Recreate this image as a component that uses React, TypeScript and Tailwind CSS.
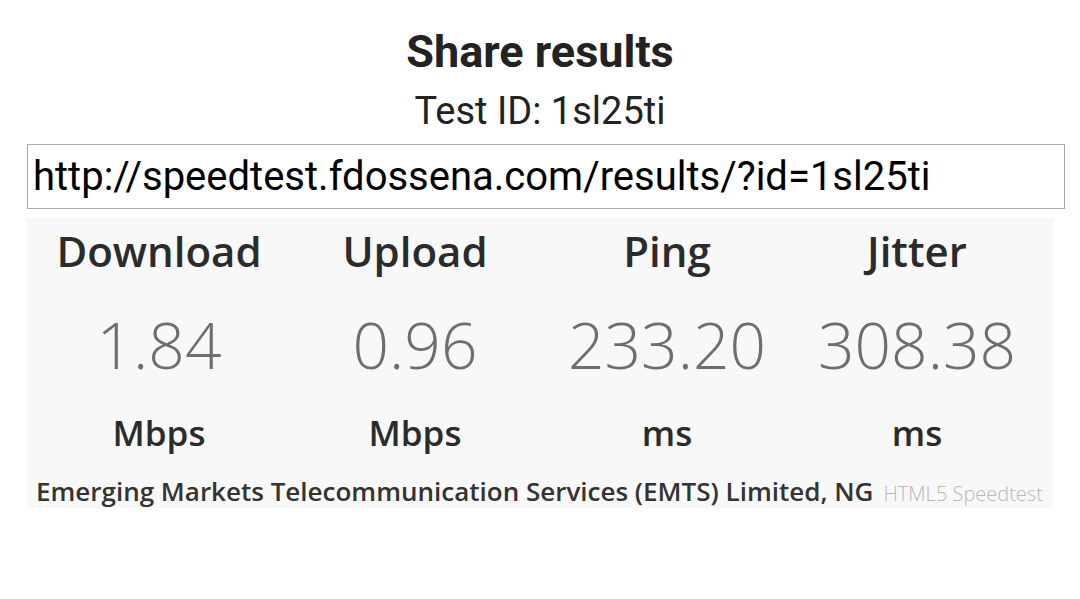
import React from "react";

const cols = [
  { label: "Download", value: "1.84", unit: "Mbps" },
  { label: "Upload", value: "0.96", unit: "Mbps" },
  { label: "Ping", value: "233.20", unit: "ms" },
  { label: "Jitter", value: "308.38", unit: "ms" },
];

export default function App() {
  return (
    <div className="w-[1080px] h-[599px] bg-white flex flex-col" style={{ fontFamily: "Roboto, sans-serif" }}>
      <h1 className="mt-[26px] text-center text-[45px] leading-[52px] font-bold text-[#222]">Share results</h1>
      <div className="text-center text-[38px] leading-[44px] text-[#222] mt-[11px]">Test ID: 1sl25ti</div>
      <div className="ml-[27px] mt-[11px] w-[1038px] h-[65px] border border-[#a9a9a9] flex items-start pt-[9px] px-[5px] text-[40px] leading-[46px] text-black">
        http://speedtest.fdossena.com/results/?id=1sl25ti
      </div>
      <div
        className="ml-[27px] mt-[9px] w-[1026px] h-[290px] bg-[#f8f8f8] flex flex-col"
        style={{ fontFamily: "'Open Sans', sans-serif" }}
      >
        <div className="grid grid-cols-[264px_248px_256px_244px] pr-[14px]">
          {cols.map((c) => (
            <div key={c.label} className="flex flex-col items-center">
              <div className="pt-[7px] text-[42px] leading-[52px] font-semibold text-[#2b2b2b]">{c.label}</div>
              <div className="pt-[28px] text-[64px] leading-[80px] font-light text-[#6e6e6e]">{c.value}</div>
              <div className="pt-[24px] text-[35px] leading-[48px] font-semibold text-[#2b2b2b]">{c.unit}</div>
            </div>
          ))}
        </div>
        <div className="pl-[9px] mt-[16px] flex items-baseline whitespace-nowrap">
          <span className="text-[26px] leading-[36px] font-semibold text-[#333]">
            Emerging Markets Telecommunication Services (EMTS) Limited, NG
          </span>
          <span className="ml-[10px] text-[20px] font-light text-[#b8b8b8]">HTML5 Speedtest</span>
        </div>
      </div>
    </div>
  );
}
